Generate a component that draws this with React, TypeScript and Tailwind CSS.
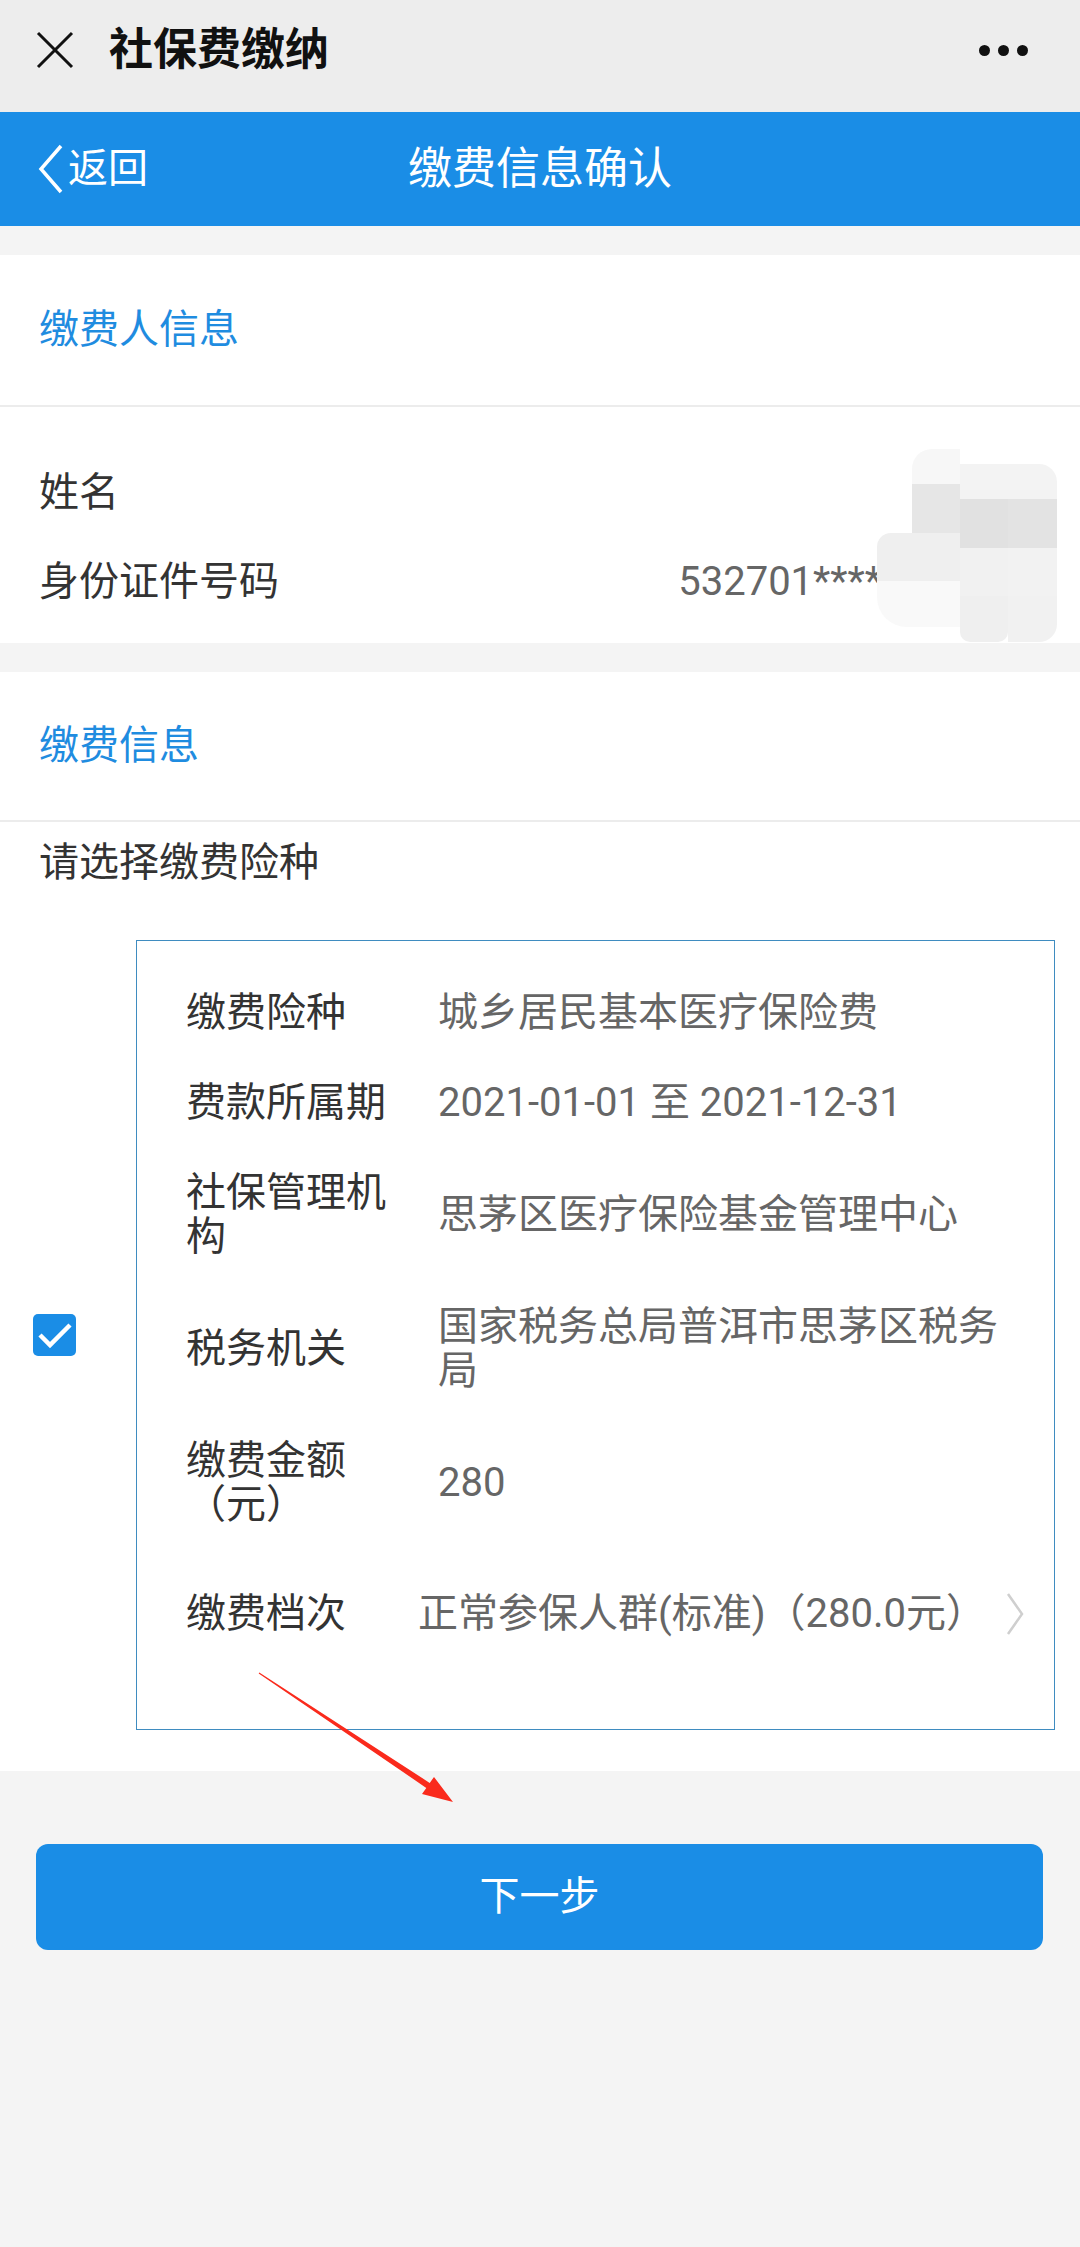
import React from "react";

const rows = [
  { label: "缴费险种", value: "城乡居民基本医疗保险费" },
  { label: "费款所属期", value: "2021-01-01 至 2021-12-31" },
  { label: "社保管理机构", value: "思茅区医疗保险基金管理中心" },
  { label: "税务机关", value: "国家税务总局普洱市思茅区税务局" },
  { label: "缴费金额（元）", value: "280" },
];

// blurred block over the ID number
const mosaic = [
  ["bg-transparent", "bg-[#f7f7f7] rounded-tl-[20px]", "bg-[#f3f3f3] mt-[15px]", "bg-[#f3f3f3] mt-[15px] rounded-tr-[18px]"],
  ["bg-transparent", "bg-[#e6e6e6]", "bg-[#e1e1e1]", "bg-[#e3e3e3]"],
  ["bg-[#efefef] rounded-tl-[14px]", "bg-[#efefef]", "bg-[#f1f1f1]", "bg-[#f2f2f2]"],
  ["bg-[#f9f9f9] rounded-bl-[30px]", "bg-[#f9f9f9]", "bg-[#efefef] rounded-b-[10px]", "bg-[#f1f1f1] rounded-br-[18px]"],
];
const colW = ["w-[35px]", "w-[48px]", "w-[48px]", "w-[49px]"];
const rowH = ["h-[35px]", "h-[49px]", "h-[48px]", "h-[46px]"];

export default function App() {
  return (
    <div className="relative min-h-[2247px] w-[1080px] bg-[#f4f4f4] font-[family-name:Roboto,'Noto_Sans_CJK_SC',sans-serif]">
      {/* wechat title bar */}
      <div className="h-[112px] bg-[#ededed] flex items-center pl-[36px] pr-[52px] pb-[12px]">
        <svg width="38" height="38" viewBox="0 0 38 38">
          <path d="M2 2 L36 36 M36 2 L2 36" stroke="#111" strokeWidth="3" />
        </svg>
        <div className="ml-[35px] text-[44px] font-bold text-[#111] leading-none">社保费缴纳</div>
        <div className="flex-1" />
        <div className="flex items-center gap-[8px]">
          <span className="w-[11px] h-[11px] rounded-full bg-[#111]" />
          <span className="w-[11px] h-[11px] rounded-full bg-[#111]" />
          <span className="w-[11px] h-[11px] rounded-full bg-[#111]" />
        </div>
      </div>

      {/* page nav */}
      <div className="h-[114px] bg-[#1a8de6] grid grid-cols-[1fr_auto_1fr] items-center text-white">
        <div className="flex items-center pl-[38px]">
          <svg width="26" height="50" viewBox="0 0 26 50">
            <polyline points="23,2 3,25 23,48" fill="none" stroke="#fff" strokeWidth="3.5" />
          </svg>
          <span className="ml-[4px] text-[40px] leading-none">返回</span>
        </div>
        <div className="text-[44px] leading-none">缴费信息确认</div>
        <div />
      </div>

      <div className="h-[29px]" />

      {/* payer info */}
      <div className="bg-white">
        <div className="h-[152px] flex items-center px-[39px] border-b-2 border-[#ececec] text-[40px] text-[#1f8ce0]">
          缴费人信息
        </div>
        <div className="relative pt-[41px] pb-[17px] text-[40px]">
          <div className="h-[89px] flex items-center px-[39px] text-[#333]">姓名</div>
          <div className="h-[89px] flex items-center justify-between pl-[39px] pr-[198px]">
            <span className="text-[#333]">身份证件号码</span>
            <span className="text-[#666]">532701****</span>
          </div>
          <div className="absolute left-[877px] top-[42px] flex">
            {colW.map((w, c) => (
              <div key={c} className={`flex flex-col ${w}`}>
                {rowH.map((h, r) => (
                  <div key={r} className={`${h} ${mosaic[r][c]}`} />
                ))}
              </div>
            ))}
          </div>
        </div>
      </div>

      <div className="h-[29px]" />

      {/* payment info */}
      <div className="bg-white pb-[41px]">
        <div className="h-[150px] flex items-center px-[39px] border-b-2 border-[#ececec] text-[40px] text-[#1f8ce0]">
          缴费信息
        </div>
        <div className="pt-[19px] px-[39px] text-[40px] leading-[44px] text-[#333]">请选择缴费险种</div>

        <div className="mt-[55px] flex items-center">
          <div className="w-[136px] pl-[33px]">
            <div className="w-[43px] h-[42px] rounded-[5px] bg-[#1a8de6] flex items-center justify-center">
              <svg width="43" height="42" viewBox="0 0 43 42">
                <polyline points="7,21 17,31 37,11" fill="none" stroke="#fff" strokeWidth="4.5" />
              </svg>
            </div>
          </div>
          <div className="flex-1 mr-[25px] border border-[#3f8cc0] pt-[27px] pb-[52px] pl-[49px] pr-[30px] text-[40px] leading-[44px]">
            {rows.map((r) => (
              <div key={r.label} className="flex items-center py-[23px]">
                <div className="w-[210px] shrink-0 text-[#333]">{r.label}</div>
                <div className="ml-[42px] flex-1 text-[#666]">{r.value}</div>
              </div>
            ))}
            <div className="flex items-center pt-[42px] pb-[41px]">
              <div className="w-[210px] shrink-0 text-[#333]">缴费档次</div>
              <div className="ml-[22px] flex-1 text-[#666] whitespace-nowrap">正常参保人群(标准)（280.0元）</div>
              <svg width="18" height="44" viewBox="0 0 18 44">
                <polyline points="2,2 16,22 2,42" fill="none" stroke="#cfcfcf" strokeWidth="2.5" />
              </svg>
            </div>
          </div>
        </div>
      </div>

      <button className="mt-[73px] mx-[36px] w-[1007px] h-[106px] rounded-[12px] bg-[#1a8de6] text-white text-[40px] flex items-center justify-center">
        下一步
      </button>

      {/* red annotation arrow */}
      <svg className="absolute left-0 top-0 pointer-events-none" width="1080" height="2247" viewBox="0 0 1080 2247">
        <polygon
          points="258.7,1673.4 426.3,1787.9 422,1794 453,1802 434,1777 429.7,1782.9 259.3,1672.6"
          fill="#fa2a1c"
        />
      </svg>
    </div>
  );
}
